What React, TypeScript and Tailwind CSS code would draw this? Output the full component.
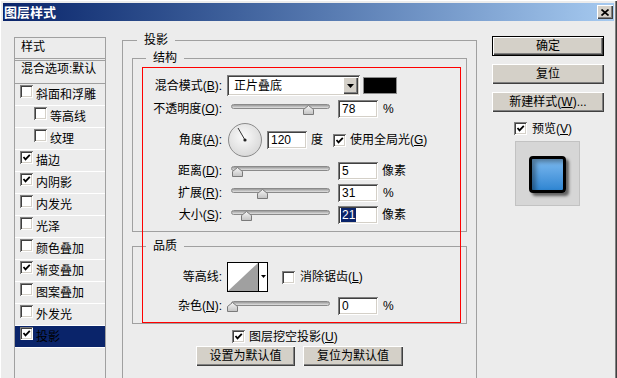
import React from "react";

const pageCls =
  "relative w-[617px] h-[378px] overflow-hidden flex flex-col pt-[3px] px-[3px] bg-[#ececec] text-black " +
  "text-[12px] leading-[12px] font-['Liberation_Sans','Noto_Sans_CJK_SC',sans-serif] " +
  "shadow-[inset_1px_1px_#ffffff,inset_-1px_0_#404040,inset_-2px_0_#808080]";

const sunken =
  "bg-white shadow-[inset_1px_1px_#808080,inset_-1px_-1px_#ffffff,inset_2px_2px_#404040,inset_-2px_-2px_#d4d0c8]";

const raised =
  "bg-[#d4d0c8] shadow-[inset_1px_1px_#ffffff,inset_-1px_-1px_#404040,inset_-2px_-2px_#808080]";

const labelCls = "w-[89px] shrink-0 text-right";

const styles = [
  { name: "斜面和浮雕", on: false },
  { name: "等高线", on: false, sub: true },
  { name: "纹理", on: false, sub: true },
  { name: "描边", on: true },
  { name: "内阴影", on: true },
  { name: "内发光", on: false },
  { name: "光泽", on: false },
  { name: "颜色叠加", on: false },
  { name: "渐变叠加", on: true },
  { name: "图案叠加", on: false },
  { name: "外发光", on: false },
  { name: "投影", on: true, active: true },
];

function Check({ on = false }: { on?: boolean }) {
  return (
    <span className={`w-[13px] h-[13px] shrink-0 flex items-center justify-center ${sunken}`}>
      {on && (
        <svg width="9" height="9" viewBox="0 0 9 9">
          <path d="M1.5 4 L3.5 6.3 L7.8 1.8" fill="none" stroke="#000" strokeWidth="1.8" />
        </svg>
      )}
    </span>
  );
}

function Slider({ at, className = "" }: { at: number; className?: string }) {
  return (
    <div className={`relative w-[99px] h-[12px] self-start mt-[4px] shrink-0 ${className}`}>
      <div className="h-[5px] rounded-full border border-[#8a8a8a] bg-linear-to-b from-[#9a9a9a] to-[#e2e2e2]" />
      <svg className="absolute top-[1px]" style={{ left: at - 5.5 }} width="11" height="10" viewBox="0 0 11 10">
        <defs>
          <linearGradient id="thumbFill" x1="0" y1="0" x2="0" y2="1">
            <stop offset="0" stopColor="#f6f6f6" />
            <stop offset="1" stopColor="#c2c2c2" />
          </linearGradient>
        </defs>
        <path d="M0.5 9.5 V4.5 L5.5 0.5 L10.5 4.5 V9.5 Z" fill="url(#thumbFill)" stroke="#7a7a7a" />
      </svg>
    </div>
  );
}

function Field({ value, sel = false, className = "" }: { value: string; sel?: boolean; className?: string }) {
  return (
    <div className={`w-[40px] h-[18px] shrink-0 flex items-center pl-[3px] ${sunken} ${className}`}>
      <span className={sel ? "bg-[#0a246a] text-white px-[1px] leading-[14px]" : "pl-[1px]"}>{value}</span>
    </div>
  );
}

function Group({ title, className = "", children }: { title: string; className?: string; children?: React.ReactNode }) {
  return (
    <div className={`relative w-[335px] shrink-0 border border-[#a0a0a0] ${className}`}>
      <span className="absolute left-[13px] -top-[7px] px-[7px] bg-[#ececec]">{title}</span>
      {children}
    </div>
  );
}

function Btn({ children, className = "" }: { children: React.ReactNode; className?: string }) {
  return (
    <div className={`h-[20px] shrink-0 flex items-center justify-center ${raised} ${className}`}>{children}</div>
  );
}

function Dial() {
  return (
    <svg className="ml-[6px] shrink-0" width="34" height="34" viewBox="0 0 34 34">
      <defs>
        <radialGradient id="dialFill" cx="45%" cy="40%" r="65%">
          <stop offset="0" stopColor="#fbfbfb" />
          <stop offset="1" stopColor="#d6d6d6" />
        </radialGradient>
      </defs>
      <circle cx="17" cy="17" r="16.5" fill="url(#dialFill)" stroke="#8a8a8a" />
      <line x1="17" y1="17" x2="10" y2="5" stroke="#333" strokeWidth="1" />
      <circle cx="17" cy="17" r="1.6" fill="#222" />
    </svg>
  );
}

export default function App() {
  return (
    <div className={pageCls}>
      {/* title bar */}
      <div className="h-[18px] shrink-0 flex items-center pl-[1px] bg-linear-to-r from-[#0a246a] to-[#a6caf0]">
        <span className="text-white font-bold text-[13px] leading-[13px]">图层样式</span>
        <div className={`ml-auto mr-[1px] w-[16px] h-[14px] flex items-center justify-center ${raised}`}>
          <svg width="8" height="7" viewBox="0 0 8 7">
            <path d="M0.5 0.5 L7.5 6.5 M7.5 0.5 L0.5 6.5" stroke="#000" strokeWidth="1.7" />
          </svg>
        </div>
      </div>

      <div className="flex items-start">
        {/* style list */}
        <div className="ml-[11px] mt-[16px] w-[92px] h-[360px] shrink-0 border border-[#a0a0a0]">
          <div className="h-[21px] border-b border-[#a0a0a0] pl-[6px] pt-[3px]">样式</div>
          <div className="h-[24px] mt-[1px] border-y border-[#a0a0a0] pl-[6px] pt-[2px]">混合选项:默认</div>
          {styles.map((s) => (
            <div
              key={s.name}
              className={`h-[22px] flex items-start border-b border-white ${s.active ? "bg-[#0a246a]" : ""} ${
                s.sub ? "pl-[19px]" : "pl-[5px]"
              }`}
            >
              <div className="mt-[1px]">
                <Check on={s.on} />
              </div>
              <span className="ml-[3px] mt-[5px]">{s.name}</span>
            </div>
          ))}
        </div>

        {/* drop shadow panel */}
        <div className="relative ml-[16px] mt-[19px] w-[355px] h-[360px] shrink-0 border border-[#a0a0a0]">
          <span className="absolute left-[14px] -top-[7px] px-[7px] bg-[#ececec]">投影</span>

          <Group title="结构" className="ml-[9px] mt-[17px] h-[174px]">
            <div className="mt-[16px] h-[21px] flex items-center">
              <span className={labelCls}>
                混合模式(<u>B</u>):
              </span>
              <div className={`ml-[5px] w-[133px] h-[21px] shrink-0 flex items-center ${sunken}`}>
                <span className="ml-[7px]">正片叠底</span>
                <span className={`ml-auto mr-[2px] w-[15px] h-[17px] flex items-center justify-center ${raised}`}>
                  <svg width="7" height="4" viewBox="0 0 7 4">
                    <path d="M0 0 H7 L3.5 4 Z" fill="#000" />
                  </svg>
                </span>
              </div>
              <div className="ml-[3px] w-[34px] h-[17px] shrink-0 bg-black border border-[#8c8c8c]" />
            </div>

            <div className="mt-[4px] h-[18px] flex items-center">
              <span className={labelCls}>
                不透明度(<u>O</u>):
              </span>
              <Slider at={77} className="ml-[9px]" />
              <Field value="78" className="ml-[8px]" />
              <span className="ml-[5px]">%</span>
            </div>

            <div className="mt-[5px] h-[34px] flex items-center">
              <span className={labelCls}>
                角度(<u>A</u>):
              </span>
              <Dial />
              <Field value="120" className="ml-[5px]" />
              <span className="ml-[4px]">度</span>
              <span className="ml-[10px]">
                <Check on />
              </span>
              <span className="ml-[4px]">
                使用全局光(<u>G</u>)
              </span>
            </div>

            <div className="mt-[5px] h-[18px] flex items-center">
              <span className={labelCls}>
                距离(<u>D</u>):
              </span>
              <Slider at={6} className="ml-[9px]" />
              <Field value="5" className="ml-[8px]" />
              <span className="ml-[4px]">像素</span>
            </div>

            <div className="mt-[4px] h-[18px] flex items-center">
              <span className={labelCls}>
                扩展(<u>R</u>):
              </span>
              <Slider at={31} className="ml-[9px]" />
              <Field value="31" className="ml-[8px]" />
              <span className="ml-[5px]">%</span>
            </div>

            <div className="mt-[4px] h-[18px] flex items-center">
              <span className={labelCls}>
                大小(<u>S</u>):
              </span>
              <Slider at={15} className="ml-[9px]" />
              <Field value="21" sel className="ml-[8px]" />
              <span className="ml-[4px]">像素</span>
            </div>
          </Group>

          <Group title="品质" className="ml-[9px] mt-[14px] h-[78px]">
            <div className="mt-[15px] h-[30px] flex items-center">
              <span className={labelCls}>等高线:</span>
              <svg className="ml-[5px] shrink-0" width="41" height="30" viewBox="0 0 41 30">
                <rect x="0.5" y="0.5" width="40" height="29" fill="#fff" stroke="#000" />
                <polygon points="1,29 31,1 31,29" fill="#a0a0a0" />
                <line x1="31.5" y1="0" x2="31.5" y2="30" stroke="#000" />
                <polygon points="34,13 39,13 36.5,16" fill="#000" />
              </svg>
              <span className="ml-[14px]">
                <Check />
              </span>
              <span className="ml-[5px]">
                消除锯齿(<u>L</u>)
              </span>
            </div>
            <div className="mt-[5px] h-[18px] flex items-center">
              <span className={labelCls}>
                杂色(<u>N</u>):
              </span>
              <Slider at={1} className="ml-[9px]" />
              <Field value="0" className="ml-[8px]" />
              <span className="ml-[5px]">%</span>
            </div>
          </Group>

          <div className="mt-[6px] ml-[109px] h-[13px] flex items-center">
            <Check on />
            <span className="ml-[4px]">
              图层挖空投影(<u>U</u>)
            </span>
          </div>

          <div className="mt-[3px] ml-[73px] flex gap-[8px]">
            <Btn className="w-[99px]">设置为默认值</Btn>
            <Btn className="w-[100px]">复位为默认值</Btn>
          </div>
        </div>

        {/* right buttons */}
        <div className="ml-[15px] mt-[15px] w-[112px] shrink-0 flex flex-col">
          <div className="h-[20px] border border-black">
            <div className={`h-full flex items-center justify-center ${raised}`}>确定</div>
          </div>
          <Btn className="mt-[8px]">复位</Btn>
          <Btn className="mt-[8px]">
            新建样式(<u>W</u>)...
          </Btn>
          <div className="mt-[10px] ml-[22px] h-[13px] flex items-center">
            <Check on />
            <span className="ml-[5px]">
              预览(<u>V</u>)
            </span>
          </div>
          <div className="mt-[6px] ml-[23px] w-[65px] h-[65px] bg-[#d6d6d6] border border-[#c2c2c2] pl-[13px] pt-[14px]">
            <div className="w-[37px] h-[37px] rounded-[4px] border-[3px] border-black bg-linear-to-b from-[#7cbaf0] to-[#2f86d2] shadow-[3px_3px_3px_rgba(0,0,0,0.55),inset_4px_3px_4px_rgba(0,0,0,0.35)]" />
          </div>
        </div>
      </div>

      {/* red annotation box */}
      <div className="absolute left-[142px] top-[67px] w-[319px] h-[256px] border border-[#ff0000] pointer-events-none" />
    </div>
  );
}
